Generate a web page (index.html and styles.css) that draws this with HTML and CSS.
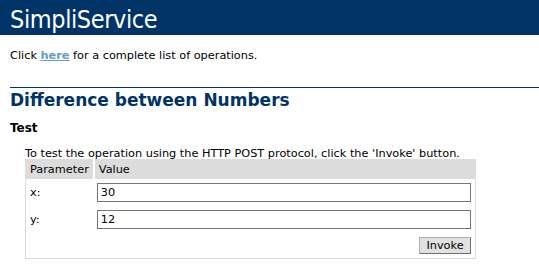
FILE: index.html
```html
<!DOCTYPE html>
<html lang="en"><head>
    <meta charset="UTF-8">
    <meta name="viewport" content="width=device-width, initial-scale=1.0">
    <title>SimpliService Web Service</title>
    <link rel="stylesheet" href="styles.css">
</head>
<body>
    <p class="heading1">SimpliService</p>
    <div id="content">
        <p class="intro">Click <a href="#">here</a> for a complete list of operations.</p>
        <hr>
        <h2>Difference between Numbers</h2>
        <h3>Test</h3>
        <div class="test">
            <p class="frmText">To test the operation using the HTTP POST protocol, click the 'Invoke' button.</p>
            <form>
                <table class="frm">
                    <tr>
                        <td class="frmHeader first">Parameter</td>
                        <td class="frmHeader">Value</td>
                    </tr>
                    <tr>
                        <td class="frmLabel">x:</td>
                        <td class="frmField"><input class="frmInput" type="text" name="x" value="30"></td>
                    </tr>
                    <tr>
                        <td class="frmLabel">y:</td>
                        <td class="frmField"><input class="frmInput" type="text" name="y" value="12"></td>
                    </tr>
                    <tr>
                        <td></td>
                        <td class="frmField right"><input type="submit" value="Invoke" class="button"></td>
                    </tr>
                </table>
            </form>
        </div>
    </div>
</body>
</html>
```

FILE: styles.css
```css
body {
    margin: 0;
    color: #000000;
    font-family: "DejaVu Sans", Verdana, sans-serif;
    font-size: 11.3px;
    background-color: #ffffff;
}
.heading1 {
    margin: 0;
    height: 31px;
    padding: 4px 0 0 10px;
    line-height: 32px;
    color: #ffffff;
    background-color: #003366;
    font-family: "DejaVu Sans Condensed", "DejaVu Sans", sans-serif;
    font-stretch: condensed;
    font-size: 25px;
    letter-spacing: -0.4px;
    font-weight: normal;
}
#content {
    margin-left: 10px;
}
.intro {
    margin: 14px 0 0 0;
    line-height: 14px;
}
a:link, a:visited {
    color: #6699cc;
    font-weight: bold;
    text-decoration: underline;
}
hr {
    margin: 24px 0 0 0;
    height: 0;
    border: none;
    border-top: 1px solid #003366;
}
h2 {
    margin: 2px 0 0 0;
    font-size: 17px;
    line-height: 20px;
    font-weight: bold;
    color: #003366;
}
h3 {
    margin: 11px 0 0 0;
    font-size: 12px;
    line-height: 15px;
    font-weight: bold;
}
.test {
    margin-left: 15px;
}
.frmText {
    margin: 12px 0 0 0;
    line-height: 11px;
}
form {
    margin: 0;
}
.frm {
    border-collapse: collapse;
    border: 1px solid #dcdcdc;
    width: 451px;
}
.frm td {
    padding: 0;
    font-size: 11.3px;
}
.frmHeader {
    height: 19px;
    padding: 0 4px !important;
    line-height: 19px;
    background: #dcdcdc;
}
.frmHeader.first {
    width: 58px;
    border-right: 2px solid #ffffff;
}
.frmLabel {
    padding-left: 4px !important;
    vertical-align: middle;
}
.frmField {
    padding: 4px 4px 4px 3px !important;
}
.right {
    text-align: right;
}
.frmInput {
    display: block;
    box-sizing: border-box;
    width: 374px;
    height: 19px;
    margin: 0;
    padding: 0 3px;
    border: 1px solid #767676;
    font-family: "DejaVu Sans", Verdana, sans-serif;
    font-size: 11.3px;
    color: #000000;
}
.button {
    box-sizing: border-box;
    height: 17px;
    width: 52px;
    margin: 0;
    padding: 0;
    border: 1px solid #adadad;
    border-right-color: #707070;
    border-bottom-color: #707070;
    background: #e1e1e1;
    font-family: "DejaVu Sans", Verdana, sans-serif;
    font-size: 11.3px;
    color: #000000;
    vertical-align: top;
}
```
